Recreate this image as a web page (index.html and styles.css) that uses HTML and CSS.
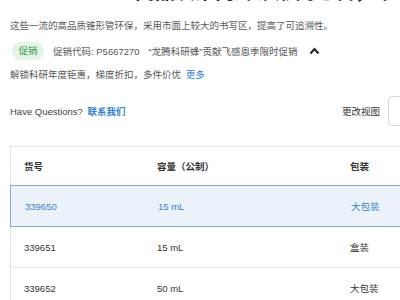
FILE: index.html
```html
<!DOCTYPE html>
<html lang="zh">
<head>
<meta charset="utf-8">
<link rel="stylesheet" href="styles.css">
</head>
<body>
<div class="page">
  <h1 class="title">高品质聚丙烯锥形离心管，带</h1>
  <p class="desc">这些一流的高品质锥形管环保，采用市面上较大的书写区，提高了可追溯性。</p>
  <div class="promo">
    <span class="badge">促销</span>
    <span class="code">促销代码: P5667270</span>
    <span class="code">“龙腾科研蜂”贡献飞感恩季限时促销</span>
    <svg class="caret" width="11" height="8" viewBox="0 0 11 8"><path d="M1.5 6.5 L5.5 2 L9.5 6.5" fill="none" stroke="#222" stroke-width="2"/></svg>
  </div>
  <p class="deal">解锁科研年度钜惠，梯度折扣，多件价优 <a class="link">更多</a></p>
  <div class="toolbar">
    <div class="ask">Have Questions? <a class="link strong">联系我们</a></div>
    <div class="view">
      <span>更改视图</span>
      <div class="select"></div>
    </div>
  </div>
  <div class="table">
    <div class="row head">
      <div>货号</div><div>容量（公制）</div><div>包装</div>
    </div>
    <div class="row active">
      <div>339650</div><div>15 mL</div><div>大包装</div>
    </div>
    <div class="row">
      <div>339651</div><div>15 mL</div><div>盒装</div>
    </div>
    <div class="row">
      <div>339652</div><div>50 mL</div><div>大包装</div>
    </div>
  </div>
</div>
</body>
</html>
```
FILE: styles.css
```css
html, body {
  margin: 0;
  padding: 0;
  background: #fff;
  overflow: hidden;
}
.page {
  width: 472px;
  padding-left: 10px;
  font-family: "Liberation Sans", Arial, "Noto Sans CJK SC", sans-serif;
  font-size: 9.5px;
  color: #555;
}
.title {
  margin: -20px 0 0 0;
  padding-left: 125px;
  font-size: 20px;
  line-height: 24px;
  font-weight: bold;
  color: #222;
  white-space: nowrap;
}
.desc {
  margin: 15px 0 0 0;
  line-height: 14px;
  color: #5a5a5a;
}
.promo {
  display: flex;
  align-items: center;
  margin-top: 9px;
  height: 18px;
}
.badge {
  display: inline-block;
  margin-left: 2px;
  width: 32px;
  height: 18px;
  line-height: 18px;
  text-align: center;
  border-radius: 9px;
  background: #e3f4e6;
  color: #3c9a54;
}
.code {
  margin-left: 9px;
  color: #555;
}
.caret {
  margin-left: 12px;
}
.deal {
  margin: 8px 0 0 0;
  line-height: 14px;
}
.link {
  color: #2f7fd0;
  margin-left: 2px;
}
.link.strong {
  font-weight: bold;
}
.toolbar {
  display: flex;
  justify-content: space-between;
  align-items: center;
  margin-top: 14px;
  height: 30px;
}
.ask {
  color: #444;
}
.view {
  display: flex;
  align-items: center;
  gap: 8px;
  color: #333;
}
.select {
  width: 92px;
  height: 28px;
  border: 1px solid #d6d6d6;
  border-radius: 4px;
}
.table {
  margin-top: 20px;
  border: 1px solid #e2e2e2;
  border-bottom: none;
}
.row {
  display: grid;
  grid-template-columns: 133px 193px 1fr;
  align-items: center;
  height: 40px;
  padding-left: 13px;
  border-bottom: 1px solid #e6e6e6;
  color: #333;
}
.row.head {
  height: 38px;
  font-weight: bold;
  color: #333;
  border-bottom: 1px solid #d8e4f0;
}
.row.active {
  background: #ebf2fa;
  border: 1px solid #7aaee0;
  margin: -1px -1px 0 -1px;
  padding-left: 14px;
  color: #3a80c8;
}
```
